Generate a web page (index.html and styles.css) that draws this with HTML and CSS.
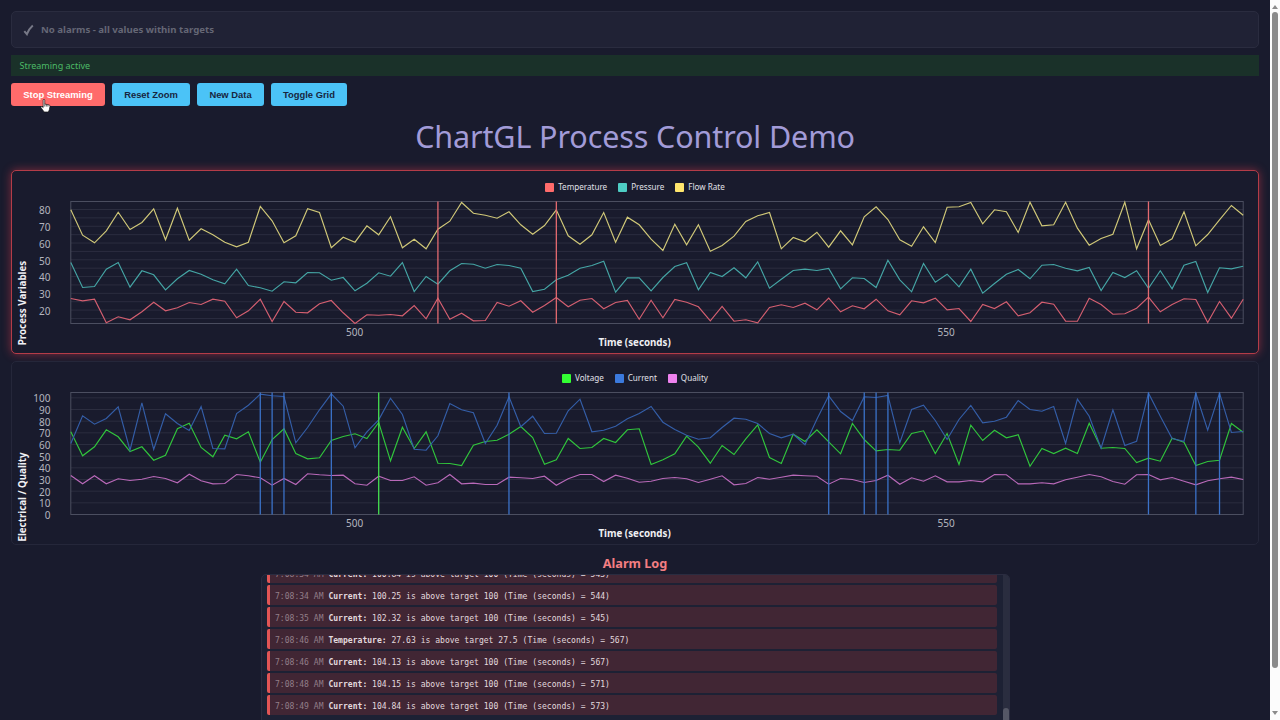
FILE: index.html
```html
<!DOCTYPE html>
<html lang="en">
<head>
    <meta charset="UTF-8">
    <meta name="viewport" content="width=device-width, initial-scale=1.0">
    <title>ChartGL Process Control Demo</title>
    <link rel="stylesheet" href="styles.css">
</head>
<body>
    <main class="page">
        <div class="alarm-banner">
            <svg class="check" viewBox="0 0 11 12"><path d="M1.3 7.2 L3.9 10.2 C5.2 6.8 7 3.9 9.8 1.5" /></svg>
            <span>No alarms - all values within targets</span>
        </div>
        <div class="status">Streaming active</div>
        <div class="controls">
            <button class="stop">Stop Streaming</button>
            <button class="reset">Reset Zoom</button>
            <button class="new">New Data</button>
            <button class="toggle">Toggle Grid</button>
        </div>

        <h1>ChartGL Process Control Demo</h1>

        <section class="chart alarm">
            <div class="legend">
                <span><i class="swatch temperature"></i>Temperature</span>
                <span><i class="swatch pressure"></i>Pressure</span>
                <span><i class="swatch flow"></i>Flow Rate</span>
            </div>
            <svg class="canvas" id="process-chart" width="1246" height="181"></svg>
        </section>

        <section class="chart">
            <div class="legend">
                <span><i class="swatch voltage"></i>Voltage</span>
                <span><i class="swatch current"></i>Current</span>
                <span><i class="swatch quality"></i>Quality</span>
            </div>
            <svg class="canvas" id="electrical-chart" width="1246" height="181"></svg>
        </section>

        <h2>Alarm Log</h2>
        <div class="log">
            <div class="entries">
                <p><time>7:08:34 AM</time> <b>Current:</b> 100.84 is above target 100 (Time (seconds) = 543)</p>
                <p><time>7:08:34 AM</time> <b>Current:</b> 100.25 is above target 100 (Time (seconds) = 544)</p>
                <p><time>7:08:35 AM</time> <b>Current:</b> 102.32 is above target 100 (Time (seconds) = 545)</p>
                <p><time>7:08:46 AM</time> <b>Temperature:</b> 27.63 is above target 27.5 (Time (seconds) = 567)</p>
                <p><time>7:08:46 AM</time> <b>Current:</b> 104.13 is above target 100 (Time (seconds) = 567)</p>
                <p><time>7:08:48 AM</time> <b>Current:</b> 104.15 is above target 100 (Time (seconds) = 571)</p>
                <p><time>7:08:49 AM</time> <b>Current:</b> 104.84 is above target 100 (Time (seconds) = 573)</p>
            </div>
            <div class="log-track"><div class="log-thumb"></div></div>
        </div>
    </main>

    <div class="scrollbar">
        <svg viewBox="0 0 6 4"><path d="M0 4 L3 0 L6 4z" /></svg>
        <div class="thumb"></div>
        <svg class="down" viewBox="0 0 6 4"><path d="M0 0 L3 4 L6 0z" /></svg>
    </div>

    <svg class="cursor" viewBox="0 0 11 15">
        <path d="M3 1.2c0-1 1.7-1 1.7 0v4.2l4.6.9c.8.2 1.1.7 1 1.5l-.7 3.8-1.1 2.3H4.1L.8 9.4c-.7-1 .3-1.8 1.2-1.1l1 .9z" />
        <path class="fingers" d="M4.7 5.5v2.6M6.4 5.8v2.3M8.1 6.2v2" />
    </svg>

    <script src="charts.js"></script>
</body>
</html>
```

FILE: styles.css
```css
* {
    margin: 0;
    padding: 0;
    box-sizing: border-box;
}

body {
    display: flex;
    height: 720px;
    overflow: hidden;
    background: #191b2d;
    color: #e0e0e8;
    font-family: "Noto Sans", "Open Sans", sans-serif;
}

.page {
    width: 1270px;
    height: 720px;
    padding: 11px 11px 0;
    overflow: hidden;
}

.alarm-banner {
    display: flex;
    align-items: center;
    gap: 7px;
    height: 37px;
    padding-left: 11px;
    border: 1px solid #2a2c3f;
    border-radius: 5px;
    background: #202235;
    color: #656775;
    font-size: 9.65px;
    font-weight: bold;
}

.check {
    width: 11px;
    height: 12px;
    fill: none;
    stroke: #777987;
    stroke-width: 2;
}

.status {
    height: 21px;
    margin-top: 7px;
    padding-left: 8.5px;
    background: #1a3129;
    color: #4cba67;
    font-size: 9px;
    line-height: 21px;
}

.controls {
    display: flex;
    gap: 7px;
    margin-top: 7px;
}

.controls button {
    height: 23px;
    border: none;
    border-radius: 3px;
    background: #4bc3f7;
    color: #17263f;
    font: bold 9.4px "Liberation Sans", Arial, sans-serif;
}

.controls .stop {
    width: 94px;
    background: #ff6b6b;
    color: #fff;
}

.controls .reset {
    width: 78px;
}

.controls .new {
    width: 67px;
}

.controls .toggle {
    width: 76px;
}

h1 {
    height: 46px;
    margin: 7px 0 11px;
    color: #a29bd8;
    font-family: "Noto Sans", "Open Sans", sans-serif;
    font-size: 30.5px;
    font-weight: 400;
    letter-spacing: -0.12px;
    line-height: 46px;
    text-align: center;
}

.chart {
    height: 184px;
    margin-bottom: 7px;
    border: 1px solid #25273a;
    border-radius: 5px;
    background: #191b2d;
}

.chart.alarm {
    border-color: #b43c48;
    box-shadow: 0 0 10px rgba(255, 65, 80, 0.45);
}

.legend {
    display: flex;
    justify-content: center;
    gap: 11px;
    height: 30px;
    padding-top: 2px;
    margin-bottom: -30px;
    font-size: 8.1px;
    line-height: 30px;
}

.legend span {
    display: flex;
    align-items: center;
    gap: 4px;
}

.swatch {
    width: 9px;
    height: 9px;
    border-radius: 1px;
}

.temperature { background: #ff6b6b; }
.pressure { background: #4ecdc4; }
.flow { background: #ffe66d; }
.voltage { background: #33ff33; }
.current { background: #3b7add; }
.quality { background: #ee82ee; }

.canvas {
    display: block;
}

.canvas text {
    font-family: "Noto Sans", "Open Sans", sans-serif;
}

.tick {
    fill: #b4b5bf;
    font-size: 10px;
}

.axis-title {
    fill: #f0f0f4;
    font-size: 9.75px;
    font-weight: bold;
}

.grid {
    stroke: #2b2d3f;
}

.frame {
    fill: none;
    stroke: #4b4e60;
}

.series {
    fill: none;
    stroke-width: 1.15;
}

h2 {
    height: 22px;
    margin-top: 1px;
    color: #f37e82;
    font-size: 12.7px;
    line-height: 23.5px;
    text-align: center;
}

.log {
    display: flex;
    justify-content: space-between;
    width: 749px;
    height: 160px;
    margin: 0 auto;
    overflow: hidden;
    border: 1px solid #2a2c40;
    border-radius: 5px;
    background: #1d2134;
}

.entries {
    width: 730px;
    margin: -12px 0 0 5px;
}

.entries p {
    height: 20px;
    margin-bottom: 2px;
    padding-left: 5.5px;
    border-left: 3px solid #e25555;
    border-radius: 2px;
    background: #412634;
    color: #e3dadf;
    font-family: "DejaVu Sans Mono", monospace;
    font-size: 8.07px;
    line-height: 23px;
    white-space: pre;
}

.entries time {
    color: #927e89;
}

.log-track {
    width: 6px;
    background: #2a2d3f;
}

.log-thumb {
    height: 20px;
    margin-top: 133px;
    border-radius: 3px;
    background: #555766;
}

.scrollbar {
    display: flex;
    flex-direction: column;
    align-items: center;
    width: 10px;
    height: 720px;
    padding: 5px 0;
    background: #fcfcfc;
}

.scrollbar svg {
    width: 6px;
    height: 4px;
    fill: #8b8b8b;
}

.thumb {
    width: 6px;
    height: 656px;
    margin-top: 3px;
    border-radius: 3px;
    background: #8b8b8b;
}

.scrollbar .down {
    margin-top: 43px;
}

.cursor {
    position: absolute;
    left: 40px;
    top: 99px;
    width: 11px;
    height: 14px;
    fill: #fff;
    stroke: #111;
    stroke-width: 0.7;
}
```

FILE: charts.js
```js
// Plot area inside each chart
const LEFT = 58.8;
const TOP = 30.5;
const WIDTH = 1172.4;
const HEIGHT = 122;
const POINTS = 100;
const UNITS = 366; // series are stored as depth below the top edge

const charts = {
    'process-chart': {
        title: 'Process Variables',
        titleX: 14,
        titleY: 132,
        grid: { start: 24, step: 25.15, count: 14 },
        ticks: { labels: [80, 70, 60, 50, 40, 30, 20], start: 26, step: 50.3 },
        series: [
            { color: '#d45f70', data: [291,298,293,364,346,355,331,302,328,319,303,309,293,299,349,328,293,360,300,332,334,307,297,334,366,340,341,339,343,312,352,290,353,335,358,357,303,314,298,332,312,288,316,296,291,322,303,297,353,296,349,294,302,316,358,315,359,355,364,318,310,318,305,325,290,331,313,322,293,328,340,298,304,290,325,321,360,309,321,301,343,334,302,308,359,359,290,309,338,337,320,287,331,309,292,294,363,300,350,293] },
            { color: '#45a5a5', data: [183,258,255,203,183,257,208,220,265,232,207,218,235,247,203,252,259,269,241,244,213,214,236,228,268,245,214,224,183,270,225,248,208,186,188,200,189,192,200,270,263,235,221,200,192,179,272,229,229,268,228,195,184,265,213,225,199,229,181,260,233,207,203,207,201,262,229,231,258,176,235,271,186,242,218,256,203,275,246,218,204,232,191,189,200,208,198,267,213,228,208,260,208,262,191,180,273,199,202,194] },
            { color: '#d0c878', data: [25,101,124,88,32,84,63,22,115,20,116,82,100,122,136,122,15,58,124,103,22,33,139,107,122,73,100,46,139,113,142,83,59,3,35,41,50,31,70,98,72,25,103,128,100,33,122,47,70,113,147,68,130,70,149,132,104,60,43,33,142,108,121,92,137,88,130,46,16,54,115,134,76,123,17,16,3,67,25,31,93,2,73,70,2,80,131,111,98,2,142,55,132,112,31,133,99,55,12,41] }
        ],
        alarms: [{ color: '#e36a70', at: [31, 41, 91] }]
    },
    'electrical-chart': {
        title: 'Electrical / Quality',
        titleX: 14,
        titleY: 135,
        grid: { start: 16, step: 35, count: 10 },
        ticks: { labels: [100, 90, 80, 70, 60, 50, 40, 30, 20, 10, 0], start: 17, step: 35 },
        series: [
            { color: '#31c53c', data: [118,190,163,112,133,177,163,203,188,109,92,165,193,128,139,118,209,141,109,183,199,196,144,132,124,138,90,205,104,168,118,212,213,219,158,147,143,125,102,135,215,202,138,168,165,138,150,112,109,216,202,184,131,164,212,159,186,139,97,195,213,125,147,112,148,184,93,141,175,171,173,123,115,183,123,216,98,144,113,136,127,221,168,183,167,183,92,167,165,168,210,197,206,137,149,219,207,203,93,119] },
            { color: '#345ea8', data: [153,70,95,78,43,173,31,171,64,93,114,42,168,169,63,38,5,10,12,151,105,52,4,41,166,118,82,17,66,170,173,130,33,52,61,153,98,13,103,71,123,122,55,20,118,113,101,79,63,42,89,111,128,140,136,105,77,80,93,123,136,125,157,80,10,57,84,13,15,9,151,51,38,84,141,81,39,91,86,74,24,51,56,42,153,20,71,167,52,159,146,2,71,138,146,2,113,2,120,117] },
            { color: '#b969b9', data: [249,274,250,274,259,264,260,252,258,271,245,265,274,273,246,250,256,278,258,276,244,247,249,248,274,278,251,264,264,253,278,271,246,274,272,276,276,254,256,258,251,278,259,246,246,267,248,257,269,266,258,255,259,270,260,250,277,273,255,260,254,248,250,251,275,258,261,270,264,248,275,256,266,250,268,268,264,268,246,247,274,274,271,274,262,254,246,253,267,275,247,246,262,255,266,277,265,259,254,261] }
        ],
        alarms: [
            { color: '#3b72c8', at: [16, 17, 18, 22, 37, 64, 67, 68, 69, 91, 95, 97] },
            { color: '#45df50', at: [26] }
        ]
    }
};

const px = i => LEFT + i * WIDTH / (POINTS - 1);
const py = v => TOP + v * HEIGHT / UNITS;

function drawChart(id, chart) {
    let out = '';

    for (let i = 0; i < chart.grid.count; i++) {
        const y = py(chart.grid.start + i * chart.grid.step);
        out += `<line class="grid" x1="${LEFT}" x2="${LEFT + WIDTH}" y1="${y}" y2="${y}" />`;
    }
    out += `<rect class="frame" x="${LEFT}" y="${TOP}" width="${WIDTH}" height="${HEIGHT}" />`;

    chart.series.forEach(s => {
        const points = s.data.map((v, i) => `${px(i).toFixed(1)},${py(v).toFixed(1)}`).join(' ');
        out += `<polyline class="series" stroke="${s.color}" points="${points}" />`;
    });

    chart.alarms.forEach(a => {
        a.at.forEach(i => {
            out += `<line stroke="${a.color}" stroke-width="1.3" x1="${px(i)}" x2="${px(i)}" y1="${TOP}" y2="${TOP + HEIGHT}" />`;
        });
    });

    chart.ticks.labels.forEach((label, i) => {
        const y = py(chart.ticks.start + i * chart.ticks.step) + 4.1;
        out += `<text class="tick" text-anchor="end" x="38.5" y="${y}">${label}</text>`;
    });
    out += `<text class="tick" text-anchor="middle" x="${px(24) - 0.4}" y="165">500</text>`;
    out += `<text class="tick" text-anchor="middle" x="${px(74) - 1}" y="165">550</text>`;
    out += `<text class="axis-title" text-anchor="middle" x="622.6" y="174.6">Time (seconds)</text>`;
    out += `<text class="axis-title" text-anchor="middle" transform="translate(${chart.titleX} ${chart.titleY}) rotate(-90)">${chart.title}</text>`;

    document.getElementById(id).innerHTML = out;
}

Object.keys(charts).forEach(id => drawChart(id, charts[id]));
```
